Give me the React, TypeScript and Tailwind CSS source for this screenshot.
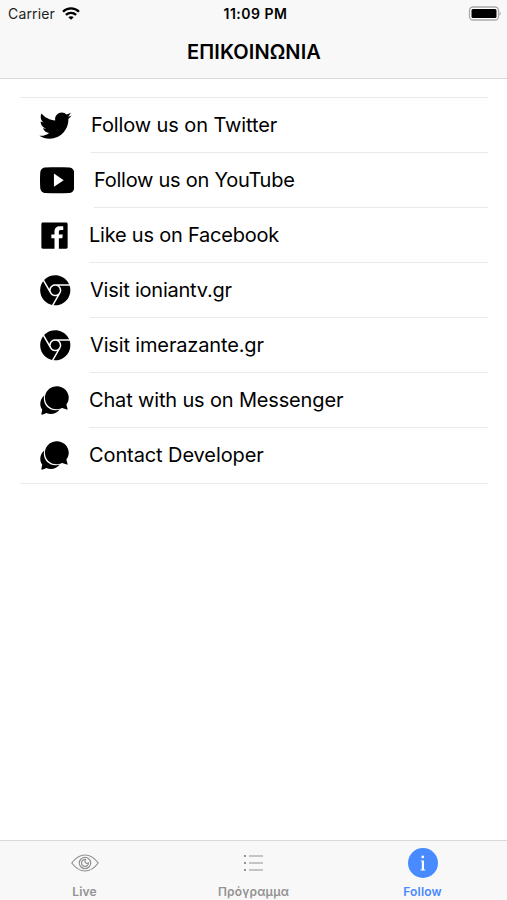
import type { ReactNode } from "react";
import {
  IoLogoTwitter,
  IoLogoYoutube,
  IoLogoFacebook,
  IoLogoChrome,
  IoIosChatbubbles,
} from "react-icons/io";

type Item = { label: string; icon: ReactNode; inset: string; text: string };

const items: Item[] = [
  { label: "Follow us on Twitter", icon: <IoLogoTwitter size={35} />, inset: "w-[71px] pl-[18px]", text: "tracking-[-0.1px]" },
  { label: "Follow us on YouTube", icon: <IoLogoYoutube size={34.5} />, inset: "w-[74px] pl-[19.500px]", text: "tracking-[-0.26px]" },
  { label: "Like us on Facebook", icon: <IoLogoFacebook size={35} />, inset: "w-[69px] pl-[17px]", text: "tracking-[-0.22px]" },
  { label: "Visit ioniantv.gr", icon: <IoLogoChrome size={34.5} />, inset: "w-[70px] pl-[18px]", text: "tracking-[-0.22px]" },
  { label: "Visit imerazante.gr", icon: <IoLogoChrome size={34.5} />, inset: "w-[70px] pl-[18px]", text: "tracking-[-0.15px]" },
  { label: "Chat with us on Messenger", icon: <IoIosChatbubbles size={35} />, inset: "w-[69px] pl-[17px]", text: "tracking-[-0.16px]" },
  { label: "Contact Developer", icon: <IoIosChatbubbles size={35} />, inset: "w-[69px] pl-[17px]", text: "tracking-[-0.1px]" },
];

function WifiIcon() {
  return (
    <svg width="18" height="13" viewBox="0 0 18 13" fill="none" stroke="#000" strokeWidth="2.300">
      <path d="M1 4.800C5.400.3 12.600.3 17 4.800" />
      <path d="M3.900 7.900c2.900-2.800 7.300-2.800 10.200 0" />
      <path d="M9 12.800 6.300 10.200c1.500-1.300 3.900-1.300 5.400 0Z" fill="#000" stroke="none" />
    </svg>
  );
}

function EyeIcon() {
  return (
    <svg width="28" height="18" viewBox="0 0 28 18" fill="none" stroke="#929292" strokeWidth="1.2">
      <path d="M.8 9C4.5 4 9 1 14 1s9.500 3 13.200 8c-3.700 5-8.200 8-13.200 8S4.500 14 .8 9Z" />
      <circle cx="14" cy="9" r="5.700" />
      <path d="M14.500 5.500a3.500 3.500 0 1 0 3 3.500c-1.300 1-3.400.2-3.500-1.500 0-.8.200-1.400.5-2Z" />
    </svg>
  );
}

function ListIcon() {
  return (
    <svg width="19" height="18" viewBox="0 0 19 18" fill="#929292">
      <path d="M0 1h2v2H0zM5 1.400h14v1.200H5zM0 8h2v2H0zM5 8.400h14v1.200H5zM0 15h2v2H0zM5 15.400h14v1.200H5z" />
    </svg>
  );
}

function InfoIcon() {
  return (
    <svg width="30" height="30" viewBox="0 0 30 30">
      <circle cx="15" cy="15" r="15" fill="#488aff" />
      <g fill="#fff">
        <circle cx="14.800" cy="8.900" r="1.400" />
        <path d="M12.700 12.400h3.300v9.200h1.300v.9h-4.800v-.9h1.300v-8.300h-1.100z" />
      </g>
    </svg>
  );
}

function Tab({ label, icon, active }: { label: string; icon: ReactNode; active?: boolean }) {
  return (
    <div className={`flex flex-1 flex-col items-center pt-[7px] ${active ? "text-[#488aff]" : "text-[#929292]"}`}>
      <div className="flex h-[30px] items-center">{icon}</div>
      <div className="mt-[7px] text-[12px] leading-[14px] font-semibold tracking-[0.2px]">{label}</div>
    </div>
  );
}

export default function App() {
  return (
    <div className="flex h-[900px] w-[507px] flex-col overflow-hidden bg-white font-['Inter',sans-serif] text-black">
      <header className="h-[79px] shrink-0 border-b border-[#d9d9d9] bg-[#f8f8f8]">
        <div className="grid h-[27px] grid-cols-3 items-center pr-[6px] pl-[8px]">
          <div className="flex items-center gap-[7px] text-[14px] tracking-[0.15px] text-[#222]">
            Carrier
            <WifiIcon />
          </div>
          <div className="pb-px pl-[2px] text-center text-[14px] font-semibold tracking-[0.5px]">11:09 PM</div>
          <div className="flex items-center justify-end">
            <svg width="33" height="16" viewBox="0 0 33 16">
              <rect x="1.500" y="1" width="29" height="13" rx="3.500" fill="#fff" stroke="#a8a8a8" strokeWidth="1.300" />
              <rect x="3.500" y="3" width="25" height="9" rx="1.500" />
              <path d="M31.500 5.500c1.600.7 1.600 3.300 0 4Z" fill="#a8a8a8" />
            </svg>
          </div>
        </div>
        <h1 className="pt-[11px] pl-px text-center text-[20px] leading-[28px] font-semibold tracking-[0.1px]">ΕΠΙΚΟΙΝΩΝΙΑ</h1>
      </header>
      <main className="flex-1 pt-[18px] pr-[19px] pl-[20px]">
        <ul className="border-t border-[#e9e9e9]">
          {items.map((item) => (
            <li key={item.label} className="group flex h-[55px] last:h-[56px] last:border-b last:border-[#e9e9e9]">
              <div className={`flex shrink-0 items-center ${item.inset}`}>{item.icon}</div>
              <div
                className={`flex flex-1 items-center border-b border-[#e9e9e9] text-[20px] group-last:border-b-0 group-last:pb-px ${item.text}`}
              >
                {item.label}
              </div>
            </li>
          ))}
        </ul>
      </main>
      <nav className="flex h-[60px] shrink-0 border-t border-[#d9d9d9] bg-[#f8f8f8]">
        <Tab label="Live" icon={<EyeIcon />} />
        <Tab label="Πρόγραμμα" icon={<ListIcon />} />
        <Tab label="Follow" icon={<InfoIcon />} active />
      </nav>
    </div>
  );
}
